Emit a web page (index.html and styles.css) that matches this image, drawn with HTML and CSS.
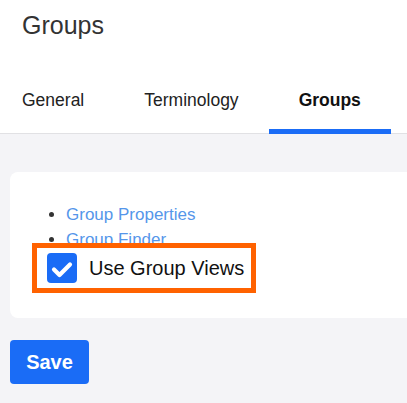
FILE: index.html
```html
<!DOCTYPE html>
<html>
<head>
<meta charset="utf-8">
<link rel="stylesheet" href="styles.css">
</head>
<body>
<header class="header">
  <h1 class="title">Groups</h1>
  <nav class="tabs">
    <a class="tab">General</a>
    <a class="tab">Terminology</a>
    <a class="tab tab-active">Groups</a>
  </nav>
</header>
<main class="main">
  <section class="card">
    <ul class="links">
      <li><a class="link">Group Properties</a></li>
      <li><a class="link">Group Finder</a></li>
    </ul>
    <label class="highlight">
      <span class="checkbox">
        <svg width="30" height="30" viewBox="0 0 30 30"><path d="M7 16.5 L12.5 22 L23 11.5" fill="none" stroke="#fff" stroke-width="4.2" stroke-linecap="round" stroke-linejoin="round"/></svg>
      </span>
      <span class="label-text">Use Group Views</span>
    </label>
  </section>
  <button class="save">Save</button>
</main>
</body>
</html>
```
FILE: styles.css
```css
html, body {
  margin: 0;
  padding: 0;
}
body {
  background: #f4f4f7;
  font-family: "Liberation Sans", Arial, sans-serif;
  overflow: hidden;
  width: 407px;
  height: 403px;
}
.header {
  background: #fff;
  padding: 10px 0 0 22px;
  border-bottom: 1px solid #e1e1e4;
}
.title {
  margin: 0;
  font-size: 25px;
  line-height: 30px;
  font-weight: normal;
  color: #333;
}
.tabs {
  display: flex;
  margin: 50px 0 -1px -30px;
}
.tab {
  padding: 0 30px 19px;
  font-size: 17.5px;
  line-height: 20px;
  color: #222;
  border-bottom: 5px solid transparent;
}
.tab-active {
  font-weight: bold;
  color: #111;
  border-bottom-color: #1a6cf6;
}
.main {
  padding: 38px 0 0 10px;
}
.card {
  background: #fff;
  border-radius: 8px 0 0 8px;
  padding: 30px 0 25px 22px;
  margin-right: -20px;
}
.links {
  margin: 0;
  padding-left: 34px;
  font-size: 17px;
  line-height: 25px;
  color: #333;
}
.link {
  color: #5596ea;
}
.highlight {
  position: relative;
  display: inline-flex;
  align-items: center;
  gap: 12px;
  height: 40px;
  margin-top: -9px;
  padding: 0 7px 0 10px;
  background: #fff;
  border: 5px solid #ff6200;
}
.checkbox {
  width: 30px;
  height: 30px;
  border-radius: 4px;
  background: #1a6cf6;
  display: block;
}
.checkbox svg {
  display: block;
}
.label-text {
  font-size: 20px;
  line-height: 23px;
  color: #111;
}
.save {
  margin-top: 22px;
  width: 79px;
  height: 44px;
  border: none;
  border-radius: 4px;
  background: #1a6cf6;
  color: #fff;
  font-family: "Liberation Sans", Arial, sans-serif;
  font-size: 20px;
  font-weight: bold;
  padding: 0;
}
```
